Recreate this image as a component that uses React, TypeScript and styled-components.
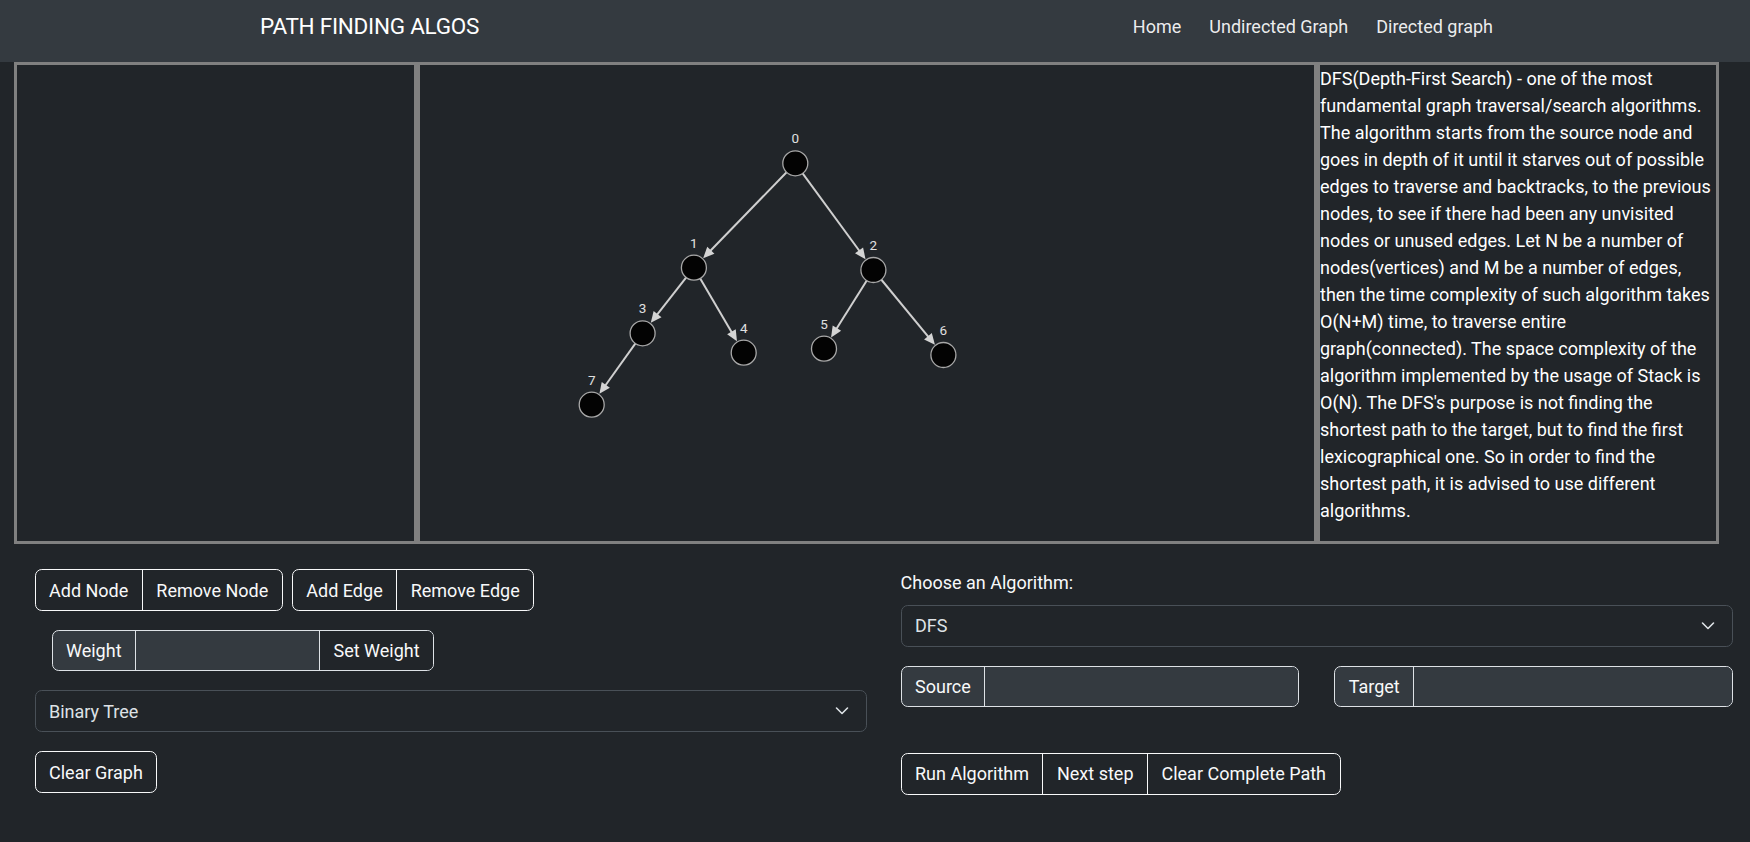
import React from "react";
import styled, { createGlobalStyle } from "styled-components";

const GlobalStyle = createGlobalStyle`
  *, *::before, *::after { box-sizing: border-box; }
  body {
    margin: 0;
    background: #212529;
    color: #f8f9fa;
    font-family: Roboto, "Segoe UI", "Liberation Sans", sans-serif;
    font-size: 18px;
    line-height: 27px;
  }
`;

/* ---------- navbar ---------- */
const Navbar = styled.header`
  height: 62px;
  background: #343a40;
  display: flex;
  align-items: flex-start;
  justify-content: space-between;
  padding: 9px 257px 0 260px;
`;

const Brand = styled.a`
  font-size: 22.5px;
  line-height: 34px;
  letter-spacing: -0.25px;
  color: #fff;
  text-decoration: none;
`;

const NavLinks = styled.nav`
  display: flex;
  align-items: center;
  gap: 28px;
  height: 34px;
`;

const NavLink = styled.a`
  color: rgba(255, 255, 255, 0.92);
  text-decoration: none;
  font-size: 18px;
  line-height: 27px;
`;

/* ---------- panels ---------- */
const Workspace = styled.main`
  display: flex;
  margin-left: 14px;
`;

const Panel = styled.section<{ $w: number }>`
  width: ${(p) => p.$w}px;
  height: 482px;
  border: 3px solid #808080;
  overflow: hidden;
`;

const Description = styled.p`
  margin: 0;
  padding-right: 3px;
  color: #fff;
  font-size: 18px;
  line-height: 27px;
`;

const GraphCanvas = styled.svg`
  display: block;
`;

const EdgeLine = styled.line`
  stroke: #cfcfcf;
  stroke-width: 2;
`;

const ArrowHead = styled.polygon`
  fill: #d4d4d4;
`;

const NodeCircle = styled.circle`
  fill: #030303;
  stroke: #a8a8a8;
  stroke-width: 1.3;
`;

const NodeLabel = styled.text`
  fill: #e0e0e0;
  font-family: Roboto, "Segoe UI", sans-serif;
  font-size: 13.5px;
  text-anchor: middle;
  dominant-baseline: central;
`;

/* ---------- controls ---------- */
const Controls = styled.div`
  display: grid;
  grid-template-columns: 832px 832.5px;
  column-gap: 34px;
  padding: 25px 0 0 34.5px;
`;

const Column = styled.div`
  display: flex;
  flex-direction: column;
  align-items: flex-start;
`;

const ButtonRow = styled.div`
  display: flex;
  gap: 9px;
`;

const ButtonGroup = styled.div<{ $mt?: number }>`
  display: inline-flex;
  border: 1px solid #f8f9fa;
  border-radius: 6.75px;
  overflow: hidden;
  margin-top: ${(p) => p.$mt ?? 0}px;
`;

const GroupButton = styled.button`
  background: transparent;
  color: #f8f9fa;
  border: none;
  font: inherit;
  line-height: 27px;
  padding: 6.5px 13.5px;
  cursor: pointer;
  & + & {
    border-left: 1px solid #f8f9fa;
  }
`;

const OutlineButton = styled.button`
  background: transparent;
  color: #f8f9fa;
  border: 1px solid #f8f9fa;
  border-radius: 6.75px;
  font: inherit;
  line-height: 27px;
  padding: 6.5px 13.5px;
  margin-top: 19px;
  cursor: pointer;
`;

const InputGroup = styled.div<{ $indent?: number; $mt?: number }>`
  display: flex;
  height: 41px;
  border: 1px solid #dee2e6;
  border-radius: 6.75px;
  overflow: hidden;
  background: #343a40;
  margin-left: ${(p) => p.$indent ?? 0}px;
  margin-top: ${(p) => p.$mt ?? 0}px;
`;

const Addon = styled.span`
  display: flex;
  align-items: center;
  padding: 0 13.5px;
  color: #f8f9fa;
  border-right: 1px solid #dee2e6;
  white-space: nowrap;
`;

const TextInput = styled.input<{ $w?: number }>`
  ${(p) => (p.$w ? `width: ${p.$w}px;` : "flex: 1; min-width: 0;")}
  background: #343a40;
  border: none;
  color: #f8f9fa;
  font: inherit;
  padding: 0 13.5px;
  outline: none;
`;

const AddonButton = styled.button`
  background: #212529;
  color: #f8f9fa;
  border: none;
  border-left: 1px solid #dee2e6;
  font: inherit;
  padding: 0 13.5px;
  cursor: pointer;
`;

const SelectWrap = styled.div<{ $mt?: number }>`
  position: relative;
  width: 100%;
  margin-top: ${(p) => p.$mt ?? 0}px;
`;

const Select = styled.select`
  display: block;
  width: 100%;
  height: 42px;
  appearance: none;
  background: #212529;
  color: #dee2e6;
  border: 1px solid #495057;
  border-radius: 6.75px;
  padding: 0 40px 0 13.5px;
  font: inherit;
  outline: none;
`;

const Chevron = styled.svg`
  position: absolute;
  right: 18px;
  top: 50%;
  transform: translateY(-50%);
  pointer-events: none;
`;

const FieldLabel = styled.label`
  color: #f8f9fa;
  margin-bottom: 8.5px;
`;

const PairRow = styled.div`
  display: grid;
  grid-template-columns: 1fr 1fr;
  column-gap: 35px;
  width: 100%;
  margin-top: 19px;
`;

/* ---------- graph data ---------- */
type GNode = { id: number; x: number; y: number };
const nodes: GNode[] = [
  { id: 0, x: 375.3, y: 98.3 },
  { id: 1, x: 273.9, y: 202.7 },
  { id: 2, x: 453.4, y: 205 },
  { id: 3, x: 222.6, y: 268.3 },
  { id: 4, x: 323.7, y: 287.7 },
  { id: 5, x: 404, y: 283.7 },
  { id: 6, x: 523.4, y: 290 },
  { id: 7, x: 171.7, y: 339.7 },
];
const edges: [number, number][] = [
  [0, 1],
  [0, 2],
  [1, 3],
  [1, 4],
  [2, 5],
  [2, 6],
  [3, 7],
];
const R = 12.5;

function edgeGeom(a: GNode, b: GNode) {
  const dx = b.x - a.x;
  const dy = b.y - a.y;
  const L = Math.hypot(dx, dy);
  const ux = dx / L;
  const uy = dy / L;
  const tipX = b.x - ux * (R + 0.8);
  const tipY = b.y - uy * (R + 0.8);
  const baseX = tipX - ux * 11;
  const baseY = tipY - uy * 11;
  const px = -uy;
  const py = ux;
  return {
    x1: a.x,
    y1: a.y,
    x2: baseX + ux * 2,
    y2: baseY + uy * 2,
    head: `${tipX},${tipY} ${baseX + px * 5},${baseY + py * 5} ${baseX - px * 5},${baseY - py * 5}`,
  };
}

function Graph() {
  return (
    <GraphCanvas width={894} height={476} viewBox="0 0 894 476">
      {edges.map(([s, t]) => {
        const g = edgeGeom(nodes[s], nodes[t]);
        return (
          <g key={`${s}-${t}`}>
            <EdgeLine x1={g.x1} y1={g.y1} x2={g.x2} y2={g.y2} />
            <ArrowHead points={g.head} />
          </g>
        );
      })}
      {nodes.map((n) => (
        <g key={n.id}>
          <NodeCircle cx={n.x} cy={n.y} r={R} />
          <NodeLabel x={n.x} y={n.y - 25}>
            {n.id}
          </NodeLabel>
        </g>
      ))}
    </GraphCanvas>
  );
}

function ChevronIcon() {
  return (
    <Chevron width="14" height="9" viewBox="0 0 14 9">
      <polyline points="1.5,1.5 7,7 12.5,1.5" fill="none" stroke="#dee2e6" strokeWidth="1.6" strokeLinecap="round" strokeLinejoin="round" />
    </Chevron>
  );
}

const description =
  "DFS(Depth-First Search) - one of the most fundamental graph traversal/search algorithms. The algorithm starts from the source node and goes in depth of it until it starves out of possible edges to traverse and backtracks, to the previous nodes, to see if there had been any unvisited nodes or unused edges. Let N be a number of nodes(vertices) and M be a number of edges, then the time complexity of such algorithm takes O(N+M) time, to traverse entire graph(connected). The space complexity of the algorithm implemented by the usage of Stack is O(N). The DFS's purpose is not finding the shortest path to the target, but to find the first lexicographical one. So in order to find the shortest path, it is advised to use different algorithms.";

export default function App() {
  return (
    <>
      <GlobalStyle />
      <Navbar>
        <Brand href="#">PATH FINDING ALGOS</Brand>
        <NavLinks>
          <NavLink href="#">Home</NavLink>
          <NavLink href="#">Undirected Graph</NavLink>
          <NavLink href="#">Directed graph</NavLink>
        </NavLinks>
      </Navbar>

      <Workspace>
        <Panel $w={403} />
        <Panel $w={900}>
          <Graph />
        </Panel>
        <Panel $w={402}>
          <Description>{description}</Description>
        </Panel>
      </Workspace>

      <Controls>
        <Column>
          <ButtonRow>
            <ButtonGroup>
              <GroupButton>Add Node</GroupButton>
              <GroupButton>Remove Node</GroupButton>
            </ButtonGroup>
            <ButtonGroup>
              <GroupButton>Add Edge</GroupButton>
              <GroupButton>Remove Edge</GroupButton>
            </ButtonGroup>
          </ButtonRow>
          <InputGroup $indent={17} $mt={19}>
            <Addon>Weight</Addon>
            <TextInput $w={183} />
            <AddonButton>Set Weight</AddonButton>
          </InputGroup>
          <SelectWrap $mt={19}>
            <Select defaultValue="binary">
              <option value="binary">Binary Tree</option>
              <option value="custom">Custom</option>
            </Select>
            <ChevronIcon />
          </SelectWrap>
          <OutlineButton>Clear Graph</OutlineButton>
        </Column>

        <Column>
          <FieldLabel>Choose an Algorithm:</FieldLabel>
          <SelectWrap>
            <Select defaultValue="dfs">
              <option value="dfs">DFS</option>
              <option value="bfs">BFS</option>
              <option value="dijkstra">Dijkstra</option>
            </Select>
            <ChevronIcon />
          </SelectWrap>
          <PairRow>
            <InputGroup>
              <Addon>Source</Addon>
              <TextInput />
            </InputGroup>
            <InputGroup>
              <Addon>Target</Addon>
              <TextInput />
            </InputGroup>
          </PairRow>
          <ButtonGroup $mt={46}>
            <GroupButton>Run Algorithm</GroupButton>
            <GroupButton>Next step</GroupButton>
            <GroupButton>Clear Complete Path</GroupButton>
          </ButtonGroup>
        </Column>
      </Controls>
    </>
  );
}
